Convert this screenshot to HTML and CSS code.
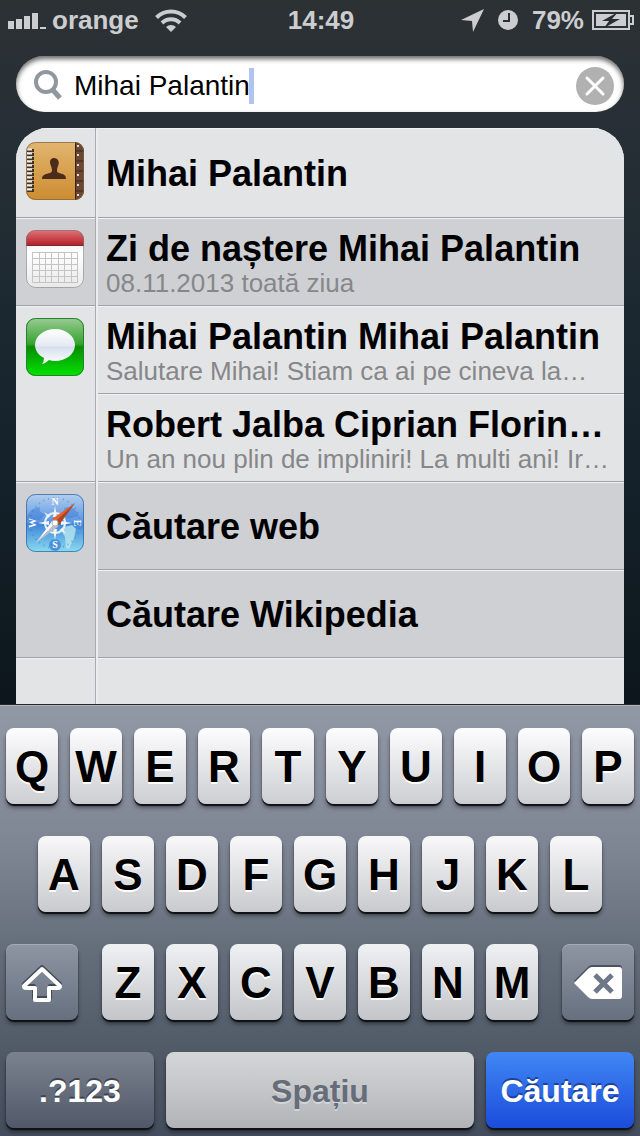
FILE: index.html
```
<!DOCTYPE html>
<html lang="ro">
<head>
    <meta charset="UTF-8">
    <meta name="viewport" content="width=device-width, initial-scale=1.0">
    <title>Spotlight</title>
    <link rel="stylesheet" href="styles.css">
</head>
<body>
    <div class="screen">
        <header class="status-bar">
            <div class="status-left">
                <svg width="38" height="20" viewBox="0 0 38 20" fill="#cccdce">
                    <path d="M0 11h6v8H0zM8 9h6v10H8zM16 6h6v13h-6zM24 3h6v16h-6zM32 17h6v2h-6z"/>
                </svg>
                <span class="carrier">orange</span>
                <svg width="32" height="24" viewBox="0 0 32 24" fill="none" stroke="#cccdce" stroke-width="4">
                    <path d="M1.500 9.500a20.500 20.500 0 0 1 29 0"/>
                    <path d="M7 15a12.700 12.700 0 0 1 18 0"/>
                    <path d="M11 19a7 7 0 0 1 10 0L16 24z" fill="#cccdce" stroke="none"/>
                </svg>
            </div>
            <span class="clock">14:49</span>
            <div class="status-right">
                <svg width="23" height="23" viewBox="0 0 23 23" fill="#cccdce">
                    <path d="M23 0L12 23L11 12L0 11z"/>
                </svg>
                <svg class="alarm" width="20" height="20" viewBox="0 0 20 20">
                    <circle cx="10" cy="10" r="10" fill="#cccdce"/>
                    <path d="M11 3v8H5" fill="none" stroke="#2b3034" stroke-width="2"/>
                </svg>
                <span class="percent">79%</span>
                <svg width="42" height="20" viewBox="0 0 42 20">
                    <path d="M1 1h36v18H1z" fill="none" stroke="#cccdce" stroke-width="2"/>
                    <path d="M38 6h3v8h-3" fill="none" stroke="#cccdce" stroke-width="2"/>
                    <path d="M4 4h30v12H4z" fill="#cccdce"/>
                    <path d="M26 2L10 11h7l-5 7l16-9h-8z" fill="#282e33"/>
                </svg>
            </div>
        </header>

        <form class="search">
            <svg class="search-icon" width="28" height="32" viewBox="0 0 28 32" fill="none" stroke="#90979f">
                <circle cx="12" cy="12" r="10" stroke-width="4"/>
                <path d="M18 19l8 9" stroke-width="5"/>
            </svg>
            <input type="text" aria-label="Căutare" value="Mihai Palantin">
            <span class="caret"></span>
            <button type="button" class="clear" aria-label="Șterge textul">
                <svg width="38" height="38" viewBox="0 0 38 38">
                    <circle cx="19" cy="19" r="19" fill="#b1b1b1"/>
                    <path d="M11 11l16 16M27 11L11 27" stroke="#fff" stroke-width="3" stroke-linecap="round"/>
                </svg>
            </button>
        </form>

        <main class="results">
            <section class="group">
                <div class="app">
                    <svg width="58" height="58" viewBox="0 0 58 58">
                        <defs>
                            <linearGradient id="leather" x1="0" y1="0" x2="0" y2="1">
                                <stop offset="0" stop-color="#e2b56f"/>
                                <stop offset="1" stop-color="#cc8c31"/>
                            </linearGradient>
                            <clipPath id="round"><rect width="58" height="58" rx="9"/></clipPath>
                        </defs>
                        <g clip-path="url(#round)">
                            <path fill="url(#leather)" d="M0 0h58v58H0z"/>
                            <path fill="#6b4835" d="M49 0h9v58h-9z"/>
                            <path d="M49.500 0v58" stroke="#3b2216"/>
                            <path d="M50 9h8M50 19h8M50 29h8M50 39h8M50 49h8" stroke="#3b2216" stroke-width="1"/>
                            <path d="M52 3v2M52 12v2M52 22v2M52 32v2M52 42v2M52 52v2" stroke="#e4d6c8" stroke-width="2"/>
                            <path d="M1 8.500h7M1 12.500h7M1 16.500h7M1 20.500h7M1 24.500h7M1 28.500h7M1 32.500h7M1 36.500h7M1 40.500h7M1 44.500h7M1 48.500h7" stroke="#3a332c" stroke-width="3"/>
                            <path d="M1 7.500h5M1 11.500h5M1 15.500h5M1 19.500h5M1 23.500h5M1 27.500h5M1 31.500h5M1 35.500h5M1 39.500h5M1 43.500h5M1 47.500h5" stroke="#e9ebee" stroke-width="2"/>
                        </g>
                        <path fill="#4d2b1b" d="M16 37c0-5 5-5 8-6c3-1 2-4 1-7c-2-4-1-8 3-8s6 4 4 8c-1 3-2 6 1 7c3 1 7 1 7 6z"/>
                        <rect x=".5" y=".5" width="57" height="57" rx="9" fill="none" stroke="#7d5f3c" stroke-opacity=".7"/>
                    </svg>
                </div>
                <ul class="items">
                    <li><a href="#"><strong>Mihai Palantin</strong></a></li>
                </ul>
            </section>

            <section class="group dark">
                <div class="app">
                    <svg width="58" height="58" viewBox="0 0 58 58">
                        <defs>
                            <linearGradient id="paper" x1="0" y1="0" x2="0" y2="1">
                                <stop offset="0" stop-color="#e2e2e2"/>
                                <stop offset=".4" stop-color="#fff"/>
                                <stop offset="1" stop-color="#e8e8e8"/>
                            </linearGradient>
                            <linearGradient id="red" x1="0" y1="0" x2="0" y2="1">
                                <stop offset="0" stop-color="#e0747b"/>
                                <stop offset="1" stop-color="#b62127"/>
                            </linearGradient>
                        </defs>
                        <g clip-path="url(#round)">
                            <path fill="url(#paper)" d="M0 0h58v58H0z"/>
                            <path fill="url(#red)" d="M0 0h58v15H0z"/>
                            <path fill="#79292d" d="M0 15h58v1H0z"/>
                        </g>
                        <path fill="none" stroke="#c3c4c5" d="M6.500 22.500h45v30h-45zM6.500 28.500h45M6.500 34.500h45M6.500 40.500h45M6.500 46.500h45M13.500 22v30M19.500 22v30M25.500 22v30M32.500 22v30M38.500 22v30M45.500 22v30"/>
                        <rect x=".5" y=".5" width="57" height="57" rx="9" fill="none" stroke="#777" stroke-opacity=".6"/>
                    </svg>
                </div>
                <ul class="items">
                    <li><a href="#"><strong>Zi de naștere Mihai Palantin</strong><small>08.11.2013 toată ziua</small></a></li>
                </ul>
            </section>

            <section class="group">
                <div class="app">
                    <svg width="58" height="58" viewBox="0 0 58 58">
                        <defs>
                            <linearGradient id="green" x1="0" y1="0" x2="0" y2="1">
                                <stop offset="0" stop-color="#9acb95"/>
                                <stop offset=".45" stop-color="#36a32e"/>
                                <stop offset=".5" stop-color="#078d03"/>
                                <stop offset="1" stop-color="#04e303"/>
                            </linearGradient>
                            <linearGradient id="bubble" x1="0" y1="0" x2="0" y2="1">
                                <stop offset="0" stop-color="#fff"/>
                                <stop offset=".48" stop-color="#e4eaf3"/>
                                <stop offset=".52" stop-color="#d5dfec"/>
                                <stop offset="1" stop-color="#fff"/>
                            </linearGradient>
                        </defs>
                        <rect width="58" height="58" rx="9" fill="url(#green)"/>
                        <path fill="url(#bubble)" d="M29 11c11 0 20 7 20 16s-9 16-20 16q-3 0-6-1q-3 3-7 4q2-2 2-6c-6-3-9-8-9-13c0-9 9-16 20-16z"/>
                        <rect x=".5" y=".5" width="57" height="57" rx="9" fill="none" stroke="#25812a"/>
                    </svg>
                </div>
                <ul class="items">
                    <li><a href="#"><strong>Mihai Palantin Mihai Palantin</strong><small>Salutare Mihai! Stiam ca ai pe cineva la…</small></a></li>
                    <li><a href="#"><strong>Robert Jalba Ciprian Florin…</strong><small>Un an nou plin de impliniri! La multi ani! Ir…</small></a></li>
                </ul>
            </section>

            <section class="group dark">
                <div class="app">
                    <svg width="58" height="58" viewBox="0 0 58 58">
                        <defs>
                            <linearGradient id="sea" x1="0" y1="0" x2="0" y2="1">
                                <stop offset="0" stop-color="#b3ceef"/>
                                <stop offset=".48" stop-color="#5b96e2"/>
                                <stop offset=".52" stop-color="#3f86da"/>
                                <stop offset="1" stop-color="#8bdcf0"/>
                            </linearGradient>
                        </defs>
                        <rect width="58" height="58" rx="9" fill="url(#sea)"/>
                        <path fill="#b9e6ee" fill-opacity=".8" d="M38 33l8-2l4 4l-2 9l-5 11l-3-1l-1-11l-3-5z"/>
                        <path fill="#3f7fd8" fill-opacity=".5" d="M1 22q4-8 13-9q-2 6 6 7l-6 6H1zM38 14q10-4 15 8l-12 3z"/>
                        <circle cx="29" cy="29" r="25" fill="none" stroke="#2868b8" stroke-opacity=".4" stroke-width="2" stroke-dasharray="1 4"/>
                        <circle cx="29" cy="51" r="6" fill="#4a93da"/>
                        <circle cx="29" cy="29" r="10" fill="none" stroke="#e5eef7" stroke-width="2"/>
                        <path fill="#f3f6fa" d="M29 12l2 11h-4zM29 46l2-11h-4zM12 29l11-2v4zM46 29l-11-2v4zM18 18l6 4l-2 2zM40 40l-6-4l2-2z"/>
                        <g class="compass-letters">
                            <text x="29" y="11">N</text>
                            <text x="29" y="54">S</text>
                            <text x="7" y="32" transform="rotate(-90 7 29)">W</text>
                            <text x="51" y="32" transform="rotate(90 51 29)">E</text>
                        </g>
                        <path fill="#e0622c" d="M49 9L33 30l-7-5z"/>
                        <path fill="#b04420" d="M49 9L33 31l-4-3z"/>
                        <path fill="#fafafa" d="M10 49l16-22l3 3z"/>
                        <path fill="#b9bec5" d="M10 49l23-17l-4-2z"/>
                        <circle cx="29" cy="29" r="3" fill="#fff" stroke="#b5b5b5"/>
                        <rect x=".5" y=".5" width="57" height="57" rx="9" fill="none" stroke="#3a6c9e" stroke-opacity=".8"/>
                    </svg>
                </div>
                <ul class="items">
                    <li><a href="#"><strong>Căutare web</strong></a></li>
                    <li><a href="#"><strong>Căutare Wikipedia</strong></a></li>
                </ul>
            </section>

            <div class="group filler">
                <div class="app"></div>
                <div class="items"></div>
            </div>
        </main>

        <div class="keyboard">
            <div class="key-row">
                <button class="key">Q</button>
                <button class="key">W</button>
                <button class="key">E</button>
                <button class="key">R</button>
                <button class="key">T</button>
                <button class="key">Y</button>
                <button class="key">U</button>
                <button class="key">I</button>
                <button class="key">O</button>
                <button class="key">P</button>
            </div>
            <div class="key-row indent">
                <button class="key">A</button>
                <button class="key">S</button>
                <button class="key">D</button>
                <button class="key">F</button>
                <button class="key">G</button>
                <button class="key">H</button>
                <button class="key">J</button>
                <button class="key">K</button>
                <button class="key">L</button>
            </div>
            <div class="key-row spread">
                <button class="key gray" aria-label="Shift">
                    <svg width="44" height="40" viewBox="0 0 44 40" fill="none" stroke-width="4" stroke-linejoin="round">
                        <path stroke="#434b57" d="M22 4L4 21q0 2 2 2h8v12h16V23h8q2 0 2-2z"/>
                        <path stroke="#fff" d="M22 6L4 23q0 2 2 2h9v12h14V25h9q2 0 2-2z"/>
                    </svg>
                </button>
                <div class="letters">
                    <button class="key">Z</button>
                    <button class="key">X</button>
                    <button class="key">C</button>
                    <button class="key">V</button>
                    <button class="key">B</button>
                    <button class="key">N</button>
                    <button class="key">M</button>
                </div>
                <button class="key gray" aria-label="Ștergere">
                    <svg width="48" height="36" viewBox="0 0 48 36">
                        <path fill="#4b525f" d="M0 16L14 2q2-2 4-2h27q3 0 3 3v27H18z"/>
                        <path fill="#fff" d="M0 18L14 4q2-2 4-2h27q3 0 3 3v26q0 3-3 3H18q-2 0-4-2z"/>
                        <path stroke="#6f7886" stroke-width="5" d="M21 10l17 17M38 10L21 27"/>
                    </svg>
                </button>
            </div>
            <div class="key-row">
                <button class="key wide numbers">.?123</button>
                <button class="key wide space">Spațiu</button>
                <button class="key wide submit">Căutare</button>
            </div>
        </div>
    </div>
</body>
</html>
```

FILE: styles.css
```
* {
    box-sizing: border-box;
}
body {
    margin: 0;
    font-family: "Liberation Sans", Arial, sans-serif;
    background-color: #0c171d;
}
svg {
    display: block;
    flex: none;
}
.screen {
    min-height: 100vh;
    display: flex;
    flex-direction: column;
    background: linear-gradient(#2c3134, #272f36 130px, #1d2931 300px, #15212a 480px, #0c161c 700px);
}

/* status bar */
.status-bar {
    display: grid;
    grid-template-columns: 1fr auto 1fr;
    align-items: center;
    height: 40px;
    padding: 0 6px 0 8px;
    font-size: 26px;
    font-weight: bold;
    color: #cccdce;
}
.status-left, .status-right {
    display: flex;
    align-items: center;
}
.status-right {
    justify-content: flex-end;
}
.carrier {
    margin: 0 16px 0 6px;
}
.alarm {
    margin-left: 14px;
}
.percent {
    margin: 0 8px 0 14px;
}

/* search field */
.search {
    display: flex;
    align-items: center;
    height: 56px;
    margin: 16px 16px;
    padding: 4px 10px 0 18px;
    border-radius: 28px;
    background-color: #fff;
    box-shadow: inset 0 3px 5px rgba(0, 0, 0, 0.6);
}
.search input {
    field-sizing: content;
    height: 40px;
    margin-left: 12px;
    padding: 0;
    border: 0;
    outline: 0;
    background: none;
    font: 28px "Liberation Sans", Arial, sans-serif;
    color: #000;
}
.caret {
    width: 5px;
    height: 36px;
    margin-left: -1px;
    background-color: #b1c4f1;
}
.clear {
    margin-left: auto;
    padding: 0;
    border: 0;
    background: none;
}

/* results */
.results {
    flex: 1;
    display: flex;
    flex-direction: column;
    margin: 0 16px;
    border-radius: 32px 32px 0 0;
    overflow: hidden;
    background-color: #e3e4e6;
}
.group {
    display: grid;
    grid-template-columns: 79px 1fr;
    column-gap: 3px;
    background: linear-gradient(90deg, #a9aaad 1px, #ecedef 1px) 79px 0 / 3px 100% no-repeat #e3e4e6;
}
.group.dark {
    background-color: #cfd0d4;
}
.group.filler {
    flex: 1;
}
.app {
    padding: 12px 10px;
    border-bottom: 1px solid #a1a2a5;
    box-shadow: inset 0 1px #f0f1f2;
}
.group:first-child .app {
    padding-top: 14px;
}
.items {
    min-width: 0;
    margin: 0;
    padding: 0;
    list-style: none;
}
.items li {
    height: 88px;
    border-bottom: 1px solid #a1a2a5;
    box-shadow: inset 0 1px #f0f1f2;
}
.group:first-child li {
    height: 90px;
}
.filler .app {
    border-bottom: 0;
}
.filler .app, .filler .items {
    padding: 0;
    box-shadow: inset 0 1px #f0f1f2;
}
.items a {
    display: flex;
    flex-direction: column;
    justify-content: center;
    height: 100%;
    padding: 2px 8px 0;
    color: #000;
    text-decoration: none;
    white-space: nowrap;
}
.items strong {
    font-size: 36px;
    line-height: 40px;
}
.items small {
    font-size: 26px;
    line-height: 28px;
    color: #868789;
}
.compass-letters {
    font: bold 10px "Liberation Serif", serif;
    text-anchor: middle;
    fill: #fff;
}

/* keyboard */
.keyboard {
    display: flex;
    flex-direction: column;
    gap: 32px;
    padding: 23px 6px 8px;
    border-top: 1px solid #29282d;
    background: linear-gradient(#9299a6, #7e8592 34%, #66707c 55%, #525c68 78%, #444d5d);
    box-shadow: inset 0 1px #adb2bb;
}
.key-row, .letters {
    display: flex;
    gap: 12px;
}
.indent {
    padding: 0 32px;
}
.spread {
    gap: 24px;
}
.letters {
    flex: 1;
}
.key {
    flex: 1;
    height: 76px;
    min-width: 0;
    padding: 2px 0 0;
    border: 0;
    border-radius: 8px;
    font: bold 44px "Liberation Sans", Arial, sans-serif;
    color: #000;
    text-shadow: 0 2px #fff;
    background: linear-gradient(#fdfdfe, #cdced2);
    box-shadow: 0 2px 1px #0d1116, 0 4px 4px rgba(0, 0, 0, 0.4);
}
.indent .key {
    background: linear-gradient(#f8f8f9, #c9cace);
}
.letters .key {
    background: linear-gradient(#f0f1f3, #c4c5c8);
}
.key.gray {
    flex: none;
    display: flex;
    align-items: center;
    justify-content: center;
    width: 72px;
    background: linear-gradient(#8e95a3, #66707f);
    box-shadow: inset 0 1px #a4abb6, 0 2px 1px #0d1116, 0 4px 4px rgba(0, 0, 0, 0.4);
}
.key.wide {
    flex: 148 1 0;
    font-size: 32px;
    color: #fff;
}
.key.numbers {
    background: linear-gradient(#7b828f, #515868);
    text-shadow: 0 -2px #3c424d;
}
.key.space {
    flex-grow: 308;
    color: #666c78;
    background: linear-gradient(#d4d7d8, #b2b3b7);
    text-shadow: 0 2px #d3d5d7;
}
.key.submit {
    background: linear-gradient(#4187f5, #1b4cda);
    text-shadow: 0 -2px #1c4196;
}
```
